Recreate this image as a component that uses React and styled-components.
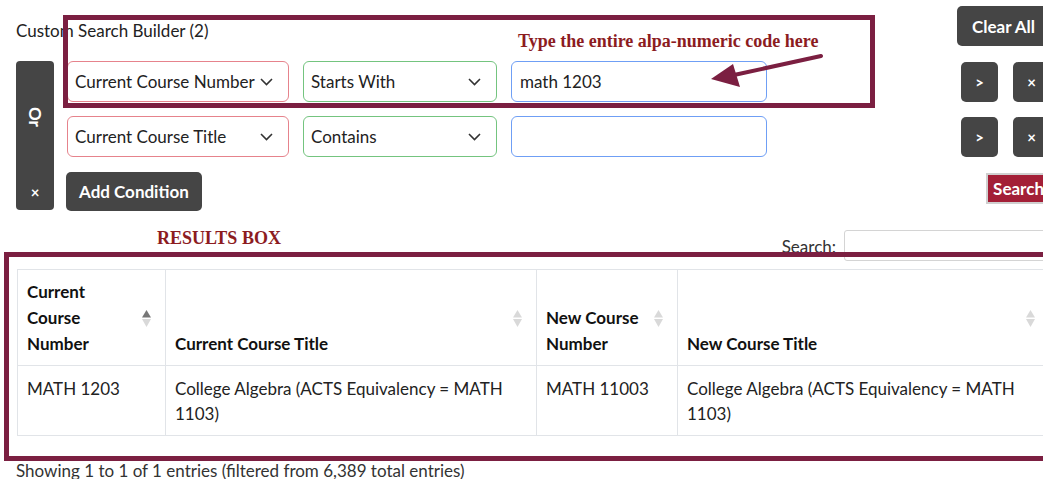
import React from 'react';
import styled, { createGlobalStyle } from 'styled-components';

const GlobalStyle = createGlobalStyle`
  html, body {
    margin: 0;
    padding: 0;
    background: #fff;
    overflow: hidden;
  }
  body {
    font-family: "Lato", "Liberation Sans", sans-serif;
    color: #222;
  }
`;

const Page = styled.div`
  position: relative;
  width: 1034px;
  padding: 6px 0 0 16px;
`;

const BuilderHeader = styled.div`
  display: flex;
  justify-content: space-between;
  align-items: flex-start;
`;

const BuilderTitle = styled.div`
  padding-top: 14px;
  font-size: 17px;
  line-height: 22px;
  color: #222;
`;

const DarkButton = styled.button`
  display: flex;
  align-items: center;
  justify-content: center;
  background: #454545;
  color: #fff;
  border: none;
  border-radius: 5px;
  font-family: "Lato", "Liberation Sans", sans-serif;
  font-weight: 700;
  font-size: ${(p) => (p.$small ? '15px' : '17px')};
  height: ${(p) => p.$height || 40}px;
  width: ${(p) => (p.$width ? `${p.$width}px` : 'auto')};
  padding: ${(p) => (p.$width ? '0' : `0 ${p.$pad || 13}px`)};
  cursor: pointer;
`;

const Builder = styled.div`
  display: flex;
  margin-top: 15px;
`;

const LogicColumn = styled.div`
  display: flex;
  flex-direction: column;
  align-items: center;
  justify-content: space-between;
  width: 38px;
  height: 149px;
  margin-right: 12px;
  padding: 46px 0 9px;
  box-sizing: border-box;
  background: #454545;
  border-radius: 4px;
  color: #fff;
  font-weight: 700;
`;

const LogicLabel = styled.span`
  writing-mode: vertical-rl;
  font-size: 17px;
`;

const LogicRemove = styled.span`
  font-size: 15px;
`;

const CriteriaColumn = styled.div`
  flex: 1;
  display: flex;
  flex-direction: column;
  gap: 14px;
`;

const CriterionRow = styled.div`
  display: flex;
  align-items: center;
`;

const FieldGroup = styled.div`
  display: flex;
  gap: 14px;
  margin-left: 1px;
`;

const SelectBox = styled.div`
  display: flex;
  align-items: center;
  justify-content: space-between;
  box-sizing: border-box;
  width: ${(p) => p.$width}px;
  height: 41px;
  padding: 0 15px 0 7px;
  border: 1px solid ${(p) => p.$tone};
  border-radius: 6px;
  font-size: 17px;
  color: #222;
  background: #fff;
`;

const ValueInput = styled.input`
  box-sizing: border-box;
  width: 256px;
  height: 41px;
  padding: 0 8px;
  border: 1px solid #6f9ff5;
  border-radius: 6px;
  font-family: "Lato", "Liberation Sans", sans-serif;
  font-size: 17px;
  color: #222;
  outline: none;
`;

const RowActions = styled.div`
  display: flex;
  gap: 15px;
  margin-left: auto;
`;

const FooterRow = styled.div`
  display: flex;
  justify-content: space-between;
  align-items: flex-start;
  margin-top: 1px;
`;

const SearchButton = styled.button`
  margin-top: 1px;
  height: 31px;
  padding: 0 4px 0 5px;
  background: #a31f37;
  color: #fff;
  border: 2px solid #cfcfcf;
  font-family: "Lato", "Liberation Sans", sans-serif;
  font-weight: 700;
  font-size: 17px;
`;

const FilterRow = styled.div`
  display: flex;
  justify-content: flex-end;
  align-items: center;
  gap: 8px;
  margin-top: 19px;
`;

const FilterLabel = styled.label`
  font-size: 17px;
  color: #333;
  padding-top: 1px;
`;

const FilterInput = styled.input`
  box-sizing: border-box;
  width: 206px;
  height: 31px;
  border: 1px solid #d4d4d4;
  border-radius: 3px;
`;

const Table = styled.table`
  margin: 8px 0 0 1px;
  width: 1032px;
  border-collapse: collapse;
  table-layout: fixed;
  border: 1px solid #e1e4e8;
  font-size: 17px;
`;

const HeadCell = styled.th`
  position: relative;
  box-sizing: border-box;
  width: ${(p) => p.$width}px;
  padding: 9px 32px 8px 9px;
  text-align: left;
  vertical-align: bottom;
  font-weight: 700;
  line-height: 26px;
  border: 1px solid #e1e4e8;
  color: #111;
`;

const SortMark = styled.svg`
  position: absolute;
  right: 14px;
  top: 50%;
  margin-top: -8px;
`;

const Cell = styled.td`
  padding: 10px 9px 9px;
  vertical-align: top;
  line-height: 25px;
  border: 1px solid #e1e4e8;
  color: #222;
`;

const InfoLine = styled.div`
  margin-top: 23px;
  font-size: 17px;
  line-height: 24px;
  color: #333;
`;

/* annotation layer drawn on top of the page */
const Frame = styled.div`
  position: absolute;
  left: ${(p) => p.$left}px;
  top: ${(p) => p.$top}px;
  width: ${(p) => p.$width}px;
  height: ${(p) => p.$height}px;
  border: 5px solid #7b1f41;
  box-sizing: border-box;
  pointer-events: none;
`;

const Note = styled.div`
  position: absolute;
  left: ${(p) => p.$left}px;
  top: ${(p) => p.$top}px;
  font-family: "Liberation Serif", "Times New Roman", serif;
  font-weight: 700;
  font-size: 18px;
  line-height: 20px;
  color: #8c1c1f;
  white-space: nowrap;
`;

const Arrow = styled.svg`
  position: absolute;
  left: 700px;
  top: 48px;
`;

const Chevron = () => (
  <svg width="13" height="8" viewBox="0 0 13 8">
    <polyline points="1,1 6.5,6.5 12,1" fill="none" stroke="#333" strokeWidth="1.6" />
  </svg>
);

const SortIcon = ({ active }) => (
  <SortMark width="9" height="17" viewBox="0 0 9 17">
    <polygon points="0,7.5 4.5,0 9,7.5" fill={active ? '#777' : '#d9d9d9'} />
    <polygon points="0,9 4.5,17 9,9" fill="#d9d9d9" />
  </SortMark>
);

const criteria = [
  { field: 'Current Course Number', condition: 'Starts With', value: 'math 1203' },
  { field: 'Current Course Title', condition: 'Contains', value: '' },
];

const columns = [
  { title: ['Current', 'Course', 'Number'], width: 148, active: true },
  { title: ['Current Course Title'], width: 371 },
  { title: ['New Course', 'Number'], width: 141 },
  { title: ['New Course Title'], width: 372 },
];

const rows = [
  ['MATH 1203', 'College Algebra (ACTS Equivalency = MATH 1103)', 'MATH 11003', 'College Algebra (ACTS Equivalency = MATH 1103)'],
];

export default function App() {
  return (
    <Page>
      <GlobalStyle />
      <BuilderHeader>
        <BuilderTitle>Custom Search Builder (2)</BuilderTitle>
        <DarkButton $pad={15}>Clear All</DarkButton>
      </BuilderHeader>

      <Builder>
        <LogicColumn>
          <LogicLabel>Or</LogicLabel>
          <LogicRemove>×</LogicRemove>
        </LogicColumn>
        <CriteriaColumn>
          {criteria.map((c) => (
            <CriterionRow key={c.field}>
              <FieldGroup>
                <SelectBox $width={222} $tone="#e6838c">
                  {c.field}
                  <Chevron />
                </SelectBox>
                <SelectBox $width={194} $tone="#74c47f">
                  {c.condition}
                  <Chevron />
                </SelectBox>
                <ValueInput defaultValue={c.value} />
              </FieldGroup>
              <RowActions>
                <DarkButton $width={37} $small>&gt;</DarkButton>
                <DarkButton $width={37} $small>×</DarkButton>
              </RowActions>
            </CriterionRow>
          ))}
          <FooterRow>
            <DarkButton $height={39}>Add Condition</DarkButton>
            <SearchButton>Search</SearchButton>
          </FooterRow>
        </CriteriaColumn>
      </Builder>

      <FilterRow>
        <FilterLabel>Search:</FilterLabel>
        <FilterInput />
      </FilterRow>

      <Table>
        <thead>
          <tr>
            {columns.map((col) => (
              <HeadCell key={col.title.join(' ')} $width={col.width}>
                {col.title.map((line, i) => (
                  <React.Fragment key={line}>
                    {i > 0 && <br />}
                    {line}
                  </React.Fragment>
                ))}
                <SortIcon active={col.active} />
              </HeadCell>
            ))}
          </tr>
        </thead>
        <tbody>
          {rows.map((r) => (
            <tr key={r[0]}>
              {r.map((v, i) => (
                <Cell key={i}>{v}</Cell>
              ))}
            </tr>
          ))}
        </tbody>
      </Table>

      <InfoLine>Showing 1 to 1 of 1 entries (filtered from 6,389 total entries)</InfoLine>

      <Frame $left={63} $top={15} $width={812} $height={93} />
      <Note $left={518} $top={31}>Type the entire alpa-numeric code here</Note>
      <Arrow width="130" height="45" viewBox="0 0 130 45">
        <line x1="121" y1="8" x2="34" y2="27" stroke="#7b1f41" strokeWidth="4" strokeLinecap="round" />
        <polygon points="11,31 33,16 40,39" fill="#7b1f41" />
      </Arrow>
      <Note $left={157} $top={228}>RESULTS BOX</Note>
      <Frame $left={4} $top={252} $width={1060} $height={209} />
    </Page>
  );
}
